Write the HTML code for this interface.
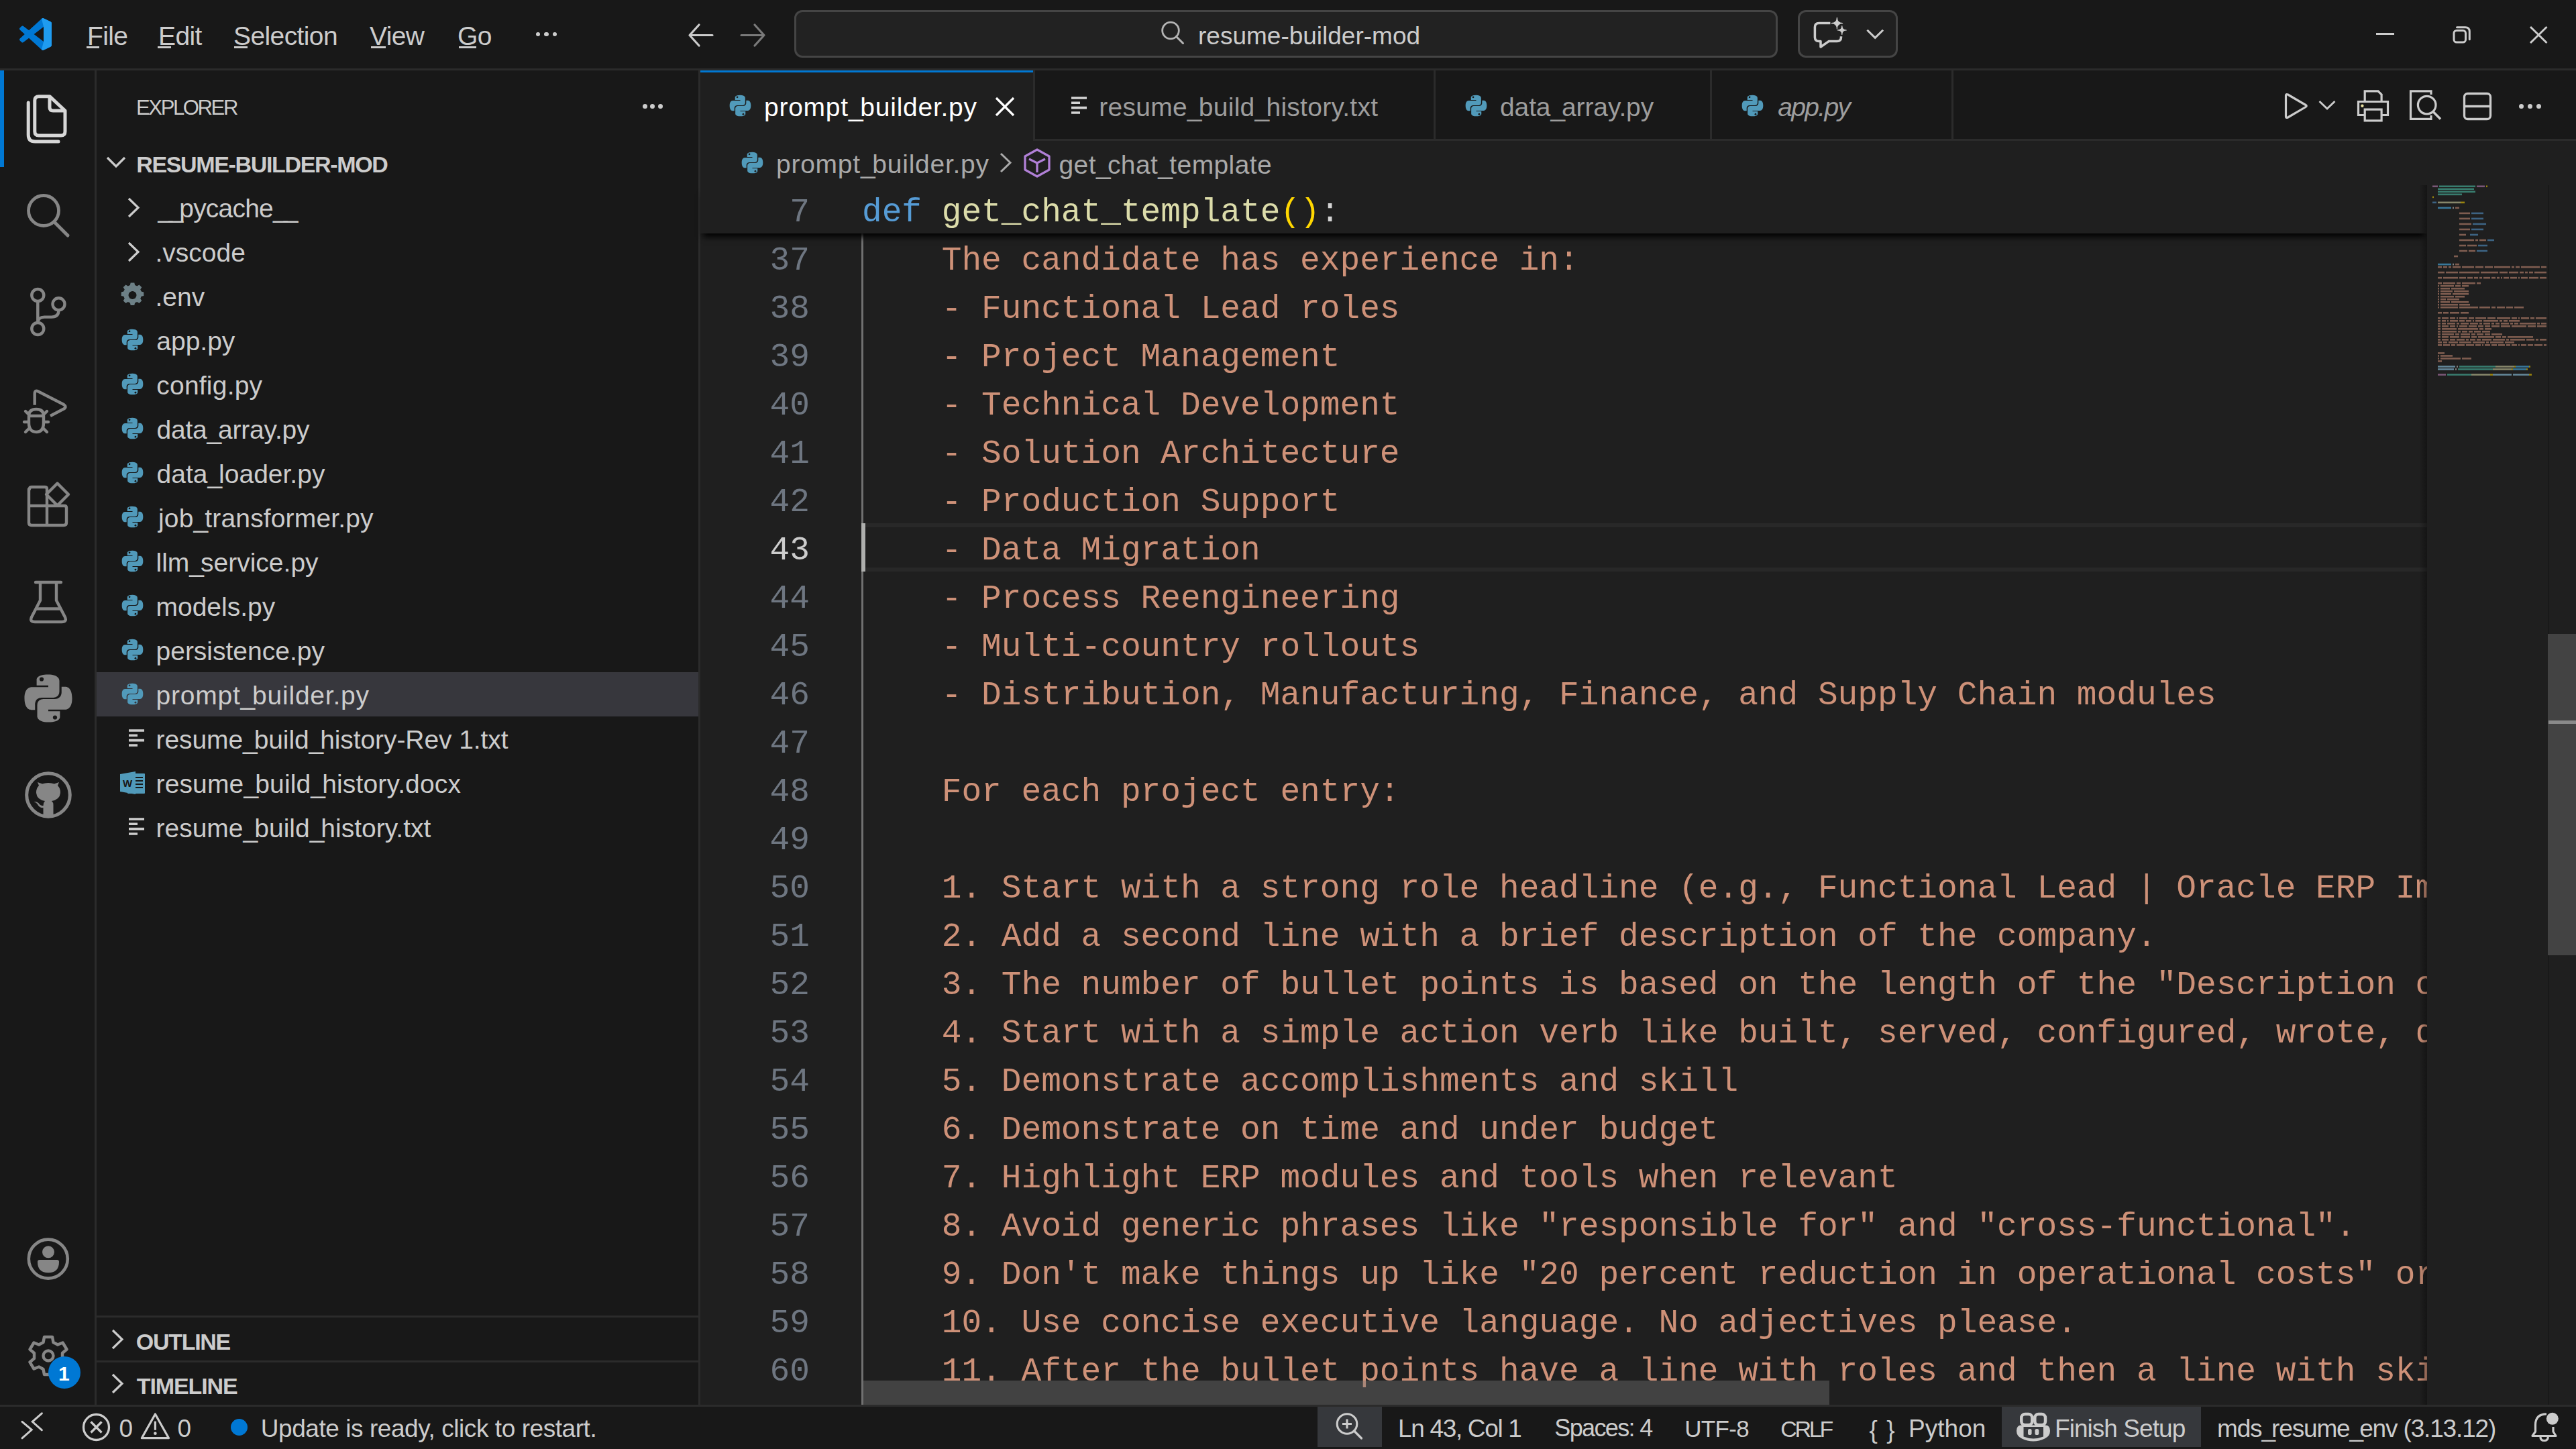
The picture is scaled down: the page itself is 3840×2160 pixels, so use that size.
<!DOCTYPE html>
<html><head><meta charset="utf-8"><title>VS Code</title>
<style>
html,body{margin:0;padding:0;width:3840px;height:2160px;overflow:hidden;background:#181818;}
body{position:relative;}
.a{position:absolute;}
.t{white-space:pre;}
svg{overflow:visible;}
</style></head><body>

<div class="a" style="left:0px;top:0px;width:3840px;height:102px;background:#181818;"></div>
<div class="a" style="left:0px;top:102px;width:3840px;height:3px;background:#2b2b2b;"></div>
<svg class="a" style="left:29px;top:27px" width="48" height="48" viewBox="0 0 100 100">
<defs><linearGradient id="lg" x1="0" y1="0" x2="1" y2="0"><stop offset="0" stop-color="#0065a9"/><stop offset="1" stop-color="#22a7f2"/></linearGradient></defs>
<path fill="#0078d4" d="M96.46 10.8L75.86.87a6.23 6.23 0 0 0-7.1 1.2L29.35 38.04 12.19 25.01a4.16 4.16 0 0 0-5.32.24L1.36 30.26a4.16 4.16 0 0 0 0 6.16L16.24 50 1.36 63.58a4.16 4.16 0 0 0 0 6.16l5.51 5.01a4.16 4.16 0 0 0 5.32.24l17.16-13.03 39.41 35.97a6.23 6.23 0 0 0 7.1 1.2l20.6-9.92A6.24 6.24 0 0 0 100 83.6V16.4a6.24 6.24 0 0 0-3.54-5.6zM75.01 72.7L45.1 50l29.91-22.7v45.4z"/>
<path fill="#1f9cf0" d="M75.86.87a6.23 6.23 0 0 0-7.1 1.2L75.01 27.3v45.4L68.76 97.93a6.23 6.23 0 0 0 7.1 1.2l20.6-9.92A6.24 6.24 0 0 0 100 83.6V16.4a6.24 6.24 0 0 0-3.54-5.6z"/>
</svg>
<div class="a t" style="left:130px;top:33.85px;font-family:'Liberation Sans',sans-serif;font-size:39px;line-height:39px;color:#cccccc;letter-spacing:-0.6px;">File</div>
<div class="a" style="left:129px;top:69px;width:19px;height:3px;background:#cccccc;"></div>
<div class="a t" style="left:236px;top:33.85px;font-family:'Liberation Sans',sans-serif;font-size:39px;line-height:39px;color:#cccccc;letter-spacing:-0.6px;">Edit</div>
<div class="a" style="left:235px;top:69px;width:20px;height:3px;background:#cccccc;"></div>
<div class="a t" style="left:348px;top:33.85px;font-family:'Liberation Sans',sans-serif;font-size:39px;line-height:39px;color:#cccccc;letter-spacing:-0.6px;">Selection</div>
<div class="a" style="left:349px;top:69px;width:20px;height:3px;background:#cccccc;"></div>
<div class="a t" style="left:551px;top:33.85px;font-family:'Liberation Sans',sans-serif;font-size:39px;line-height:39px;color:#cccccc;letter-spacing:-0.6px;">View</div>
<div class="a" style="left:553px;top:69px;width:22px;height:3px;background:#cccccc;"></div>
<div class="a t" style="left:682px;top:33.85px;font-family:'Liberation Sans',sans-serif;font-size:39px;line-height:39px;color:#cccccc;letter-spacing:-0.6px;">Go</div>
<div class="a" style="left:684px;top:69px;width:26px;height:3px;background:#cccccc;"></div>
<div class="a" style="left:798.8px;top:47.8px;width:6.4px;height:6.4px;border-radius:50%;background:#cccccc"></div>
<div class="a" style="left:811.3px;top:47.8px;width:6.4px;height:6.4px;border-radius:50%;background:#cccccc"></div>
<div class="a" style="left:823.8px;top:47.8px;width:6.4px;height:6.4px;border-radius:50%;background:#cccccc"></div>
<svg class="a" style="left:1020px;top:30px;" width="48" height="45" viewBox="0 0 48 45"><path d="M8 22.5 H42 M22 7 L8 22.5 L22 38" stroke="#cccccc" stroke-width="3.2" fill="none" stroke-linecap="round" stroke-linejoin="round"/></svg>
<svg class="a" style="left:1099px;top:30px;" width="48" height="45" viewBox="0 0 48 45"><path d="M6 22.5 H40 M26 7 L40 22.5 L26 38" stroke="#7a7a7a" stroke-width="3.2" fill="none" stroke-linecap="round" stroke-linejoin="round"/></svg>
<div class="a" style="left:1184px;top:15px;width:1460px;height:65px;border:3px solid #454545;border-radius:12px;background:#222222"></div>
<svg class="a" style="left:1726px;top:28px;" width="44" height="44" viewBox="0 0 44 44"><circle cx="19" cy="17.5" r="12.3" stroke="#b4b4b4" stroke-width="2.8" fill="none"/><path d="M27.5 26.5 L37.5 36.5" stroke="#b4b4b4" stroke-width="3" stroke-linecap="round"/></svg>
<div class="a t" style="left:1786px;top:34.55px;font-family:'Liberation Sans',sans-serif;font-size:37px;line-height:37px;color:#cccccc;">resume-builder-mod</div>
<div class="a" style="left:2680px;top:15px;width:143px;height:65px;border:3px solid #454545;border-radius:12px;background:#202020"></div>
<svg class="a" style="left:2690px;top:20px;" width="130" height="60" viewBox="0 0 130 60"><path d="M38.4 14.6 H21.4 Q15.4 14.6 15.4 20.6 V35.6 Q15.4 41.6 21.4 41.6 H24 V50 L36 41.6 H48.5 Q54.5 41.6 54.5 35.6 V34.3" stroke="#cccccc" stroke-width="3.5" fill="none" stroke-linejoin="round"/><path d="M48.4 6.299999999999999 Q48.4 14.6 56.7 14.6 Q48.4 14.6 48.4 22.9 Q48.4 14.6 40.099999999999994 14.6 Q48.4 14.6 48.4 6.299999999999999 Z M55.8 18.5 Q55.8 25 62.3 25 Q55.8 25 55.8 31.5 Q55.8 25 49.3 25 Q55.8 25 55.8 18.5 Z" fill="#cccccc" stroke="#cccccc" stroke-width="1.2" stroke-linejoin="round"/><path d="M93.4 24.7 L105.2 36.3 L117.1 24.7" stroke="#cccccc" stroke-width="3" fill="none"/></svg>
<div class="a" style="left:3542px;top:49px;width:27px;height:3px;background:#cccccc;"></div>
<svg class="a" style="left:3650px;top:35px;" width="36" height="32" viewBox="0 0 36 32"><rect x="8" y="10.5" width="17.5" height="17.5" rx="4" stroke="#cccccc" stroke-width="3" fill="none"/><path d="M12.5 5.8 H25 Q31.3 5.8 31.3 12 V23.8" stroke="#cccccc" stroke-width="3" fill="none" stroke-linecap="round"/></svg>
<svg class="a" style="left:3766px;top:35px;" width="36" height="34" viewBox="0 0 36 34"><path d="M6 5 L30.5 29 M30.5 5 L6 29" stroke="#cccccc" stroke-width="3" stroke-linecap="butt"/></svg>
<div class="a" style="left:0px;top:105px;width:141px;height:1989px;background:#181818;"></div>
<div class="a" style="left:141px;top:105px;width:3px;height:1989px;background:#2b2b2b;"></div>
<div class="a" style="left:0px;top:105px;width:6px;height:144px;background:#0078d4;"></div>
<svg class="a" style="left:36px;top:138px;" width="72" height="80" viewBox="0 0 72 80"><path d="M21.8 5.7 H38 L61 27 V57.9 Q61 63.9 55 63.9 H21.8 Q15.8 63.9 15.8 57.9 V11.7 Q15.8 5.7 21.8 5.7 Z" stroke="#d7d7d7" stroke-width="5" fill="none" stroke-linejoin="round"/><path d="M38 5.7 V22 Q38 27 43 27 H61" stroke="#d7d7d7" stroke-width="5" fill="none" stroke-linejoin="round"/><path d="M6.2 15 V63 Q6.2 73 16.2 73 H51" stroke="#d7d7d7" stroke-width="5" fill="none" stroke-linecap="round"/></svg>
<svg class="a" style="left:36px;top:282px;" width="72" height="72" viewBox="0 0 72 72"><circle cx="29" cy="32" r="22.5" stroke="#868686" stroke-width="4.8" fill="none"/><path d="M46 50 L65 69" stroke="#868686" stroke-width="5" stroke-linecap="round"/></svg>
<svg class="a" style="left:36px;top:426px;" width="72" height="78" viewBox="0 0 72 78"><circle cx="20.3" cy="14" r="9" stroke="#868686" stroke-width="4.4" fill="none"/><circle cx="51.5" cy="27.3" r="9" stroke="#868686" stroke-width="4.4" fill="none"/><circle cx="20.3" cy="64" r="9" stroke="#868686" stroke-width="4.4" fill="none"/><path d="M20.3 23 V55 M51.5 36.3 Q51.5 46.6 41 46.6 H30 Q21 46.6 20.3 55" stroke="#868686" stroke-width="4.4" fill="none"/></svg>
<svg class="a" style="left:30px;top:578px;" width="78" height="72" viewBox="0 0 78 72"><path d="M21.7 25.8 V9 Q21.7 3 27 5.5 L65 25 Q70 28.5 65 31.5 L45 42" stroke="#868686" stroke-width="4.4" fill="none" stroke-linecap="butt" stroke-linejoin="round"/><path d="M13 42 Q13 32 24 32 Q35 32 35 42 V52 Q35 66 24 66 Q13 66 13 52 Z" stroke="#868686" stroke-width="4.4" fill="none"/><path d="M14 42 H34 M8 35 L14 41 M40 35 L34 41 M6 51 H13 M35 51 H42 M8 66 L14 60 M40 66 L34 60" stroke="#868686" stroke-width="4.4" fill="none" stroke-linecap="round"/></svg>
<svg class="a" style="left:36px;top:717px;" width="72" height="72" viewBox="0 0 72 72"><path d="M8 12 Q8 9 11 9 H31 Q34 9 34 12 V37 H60 Q63 37 63 40 V62 Q63 66 59 66 H11 Q7 66 7 62 V12 Z M7 37 H34 M34 37 V66" stroke="#868686" stroke-width="4.4" fill="none" stroke-linejoin="round"/><path d="M49.5 3.5 L66 20 L49.5 36.5 L33 20 Z" stroke="#868686" stroke-width="4.4" fill="none" stroke-linejoin="round"/></svg>
<svg class="a" style="left:36px;top:860px;" width="72" height="72" viewBox="0 0 72 72"><path d="M17 8 H55" stroke="#868686" stroke-width="4.4" stroke-linecap="round"/><path d="M24 8 V35 L11 60 Q8 67 16 67 H56 Q64 67 61 60 L48 35 V8" stroke="#868686" stroke-width="4.4" fill="none" stroke-linejoin="round"/><path d="M19 47.5 H53" stroke="#868686" stroke-width="4.4"/></svg>
<svg class="a" style="left:35px;top:1004px" width="74" height="74" viewBox="0 0 100 100"><g fill="#868686"><path d="M49.6 2 C25 2 26.5 12.8 26.5 12.8 V24 H50 V27.3 H17.3 C17.3 27.3 2 25.6 2 49.8 C2 74 15.4 73.2 15.4 73.2 H23.3 V62 C23.3 62 22.9 48.6 36.5 48.6 H59.5 C59.5 48.6 72.3 48.8 72.3 36.2 V15.3 C72.3 15.3 74.3 2 49.6 2 Z"/><path d="M50.4 98 C75 98 73.5 87.2 73.5 87.2 V76 H50 V72.7 H82.7 C82.7 72.7 98 74.4 98 50.2 C98 26 84.6 26.8 84.6 26.8 H76.7 V38 C76.7 38 77.1 51.4 63.5 51.4 H40.5 C40.5 51.4 27.7 51.2 27.7 63.8 V84.7 C27.7 84.7 25.7 98 50.4 98 Z"/></g><circle cx="36.5" cy="11.5" r="4.2" fill="#181818"/><circle cx="63.5" cy="88.5" r="4.2" fill="#181818"/></svg>
<svg class="a" style="left:36px;top:1149px;" width="72" height="72" viewBox="0 0 72 72"><circle cx="36" cy="36" r="32.3" stroke="#868686" stroke-width="5" fill="none"/><path d="M22 22 L20 17 L27 19.5 Q36 16.5 45 19.5 L52 17 L50 22 Q54.5 27 54 33 Q53 43 41 45 Q43.5 47 43.5 51 V66 H28.5 V55 Q23 56 20 50 Q18.5 47.5 14.5 46 Q20 45.5 23 50 Q25 52.5 28.5 52 Q28.5 47.5 31 45 Q19 43 18 33 Q17.5 27 22 22 Z" fill="#868686"/></svg>
<svg class="a" style="left:36px;top:1841px;" width="72" height="72" viewBox="0 0 72 72"><circle cx="35.8" cy="35.6" r="29" stroke="#868686" stroke-width="4.6" fill="none"/><circle cx="36" cy="25.3" r="9" fill="#868686"/><path d="M20 40 Q20 37 23 37 H49 Q52 37 52 40 Q52 56.3 36 56.3 Q20 56.3 20 40 Z" fill="#868686"/></svg>
<svg class="a" style="left:36px;top:1987px;" width="72" height="72" viewBox="0 0 72 72"><path d="M30 6 H42 L43.5 14 L50 17.5 L57.5 14.5 L63.5 24.5 L57 30 V38 L63.5 43.5 L57.5 53.5 L50 50.5 L43.5 54 L42 62 H30 L28.5 54 L22 50.5 L14.5 53.5 L8.5 43.5 L15 38 V30 L8.5 24.5 L14.5 14.5 L22 17.5 L28.5 14 Z" stroke="#868686" stroke-width="4.4" fill="none" stroke-linejoin="round"/><circle cx="36" cy="34" r="7.5" stroke="#868686" stroke-width="4.4" fill="none"/></svg>
<div class="a" style="left:72px;top:2022px;width:48px;height:48px;border-radius:50%;background:#0078d4"></div>
<div class="a t" style="left:87px;top:2032.50px;font-family:'Liberation Sans',sans-serif;font-size:30px;line-height:30px;color:#ffffff;font-weight:700;">1</div>
<div class="a" style="left:144px;top:105px;width:897px;height:1989px;background:#181818;"></div>
<div class="a" style="left:1041px;top:105px;width:3px;height:1989px;background:#2b2b2b;"></div>
<div class="a t" style="left:203.0px;top:144.65px;font-family:'Liberation Sans',sans-serif;font-size:31px;line-height:31px;color:#cccccc;letter-spacing:-2.36px;">EXPLORER</div>
<div class="a" style="left:957.5px;top:154.5px;width:7px;height:7px;border-radius:50%;background:#cccccc"></div>
<div class="a" style="left:969.0px;top:154.5px;width:7px;height:7px;border-radius:50%;background:#cccccc"></div>
<div class="a" style="left:980.5px;top:154.5px;width:7px;height:7px;border-radius:50%;background:#cccccc"></div>
<svg class="a" style="left:156px;top:228px;" width="36" height="28" viewBox="0 0 36 28"><path d="M4 7 L17 20 L30 7" stroke="#cccccc" stroke-width="3.2" fill="none" stroke-linejoin="miter"/></svg>
<div class="a t" style="left:203.25px;top:228.10px;font-family:'Liberation Sans',sans-serif;font-size:34px;line-height:34px;color:#cccccc;font-weight:700;letter-spacing:-1.35px;">RESUME-BUILDER-MOD</div>
<svg class="a" style="left:188px;top:293px;" width="24" height="34" viewBox="0 0 24 34"><path d="M4 3 L18 16.5 L4 30" stroke="#cccccc" stroke-width="3.2" fill="none"/></svg>
<div class="a t" style="left:235.5px;top:291.35px;font-family:'Liberation Sans',sans-serif;font-size:39px;line-height:39px;color:#cccccc;letter-spacing:-0.8px;"><span style="letter-spacing:-5.80px">_</span><span style="letter-spacing:-5.80px">_</span>pycache<span style="letter-spacing:-5.80px">_</span><span style="letter-spacing:-5.80px">_</span></div>
<svg class="a" style="left:188px;top:359px;" width="24" height="34" viewBox="0 0 24 34"><path d="M4 3 L18 16.5 L4 30" stroke="#cccccc" stroke-width="3.2" fill="none"/></svg>
<div class="a t" style="left:231.5px;top:357.35px;font-family:'Liberation Sans',sans-serif;font-size:39px;line-height:39px;color:#cccccc;">.vscode</div>
<svg class="a" style="left:180px;top:423px;" width="36" height="36" viewBox="0 0 36 36"><g fill="#6d8086"><path d="M14.5 1 H21.5 L22.5 5.5 L26.5 7.3 L30.5 4.8 L35.2 9.5 L32.7 13.5 L34.5 17.5 L39 18.5 V25.5 L34.5 26.5 L32.7 30.5 L35.2 34.5 L30.5 39.2 L26.5 36.7 L22.5 38.5 L21.5 43 H14.5 L13.5 38.5 L9.5 36.7 L5.5 39.2 L0.8 34.5 L3.3 30.5 L1.5 26.5 L-3 25.5 V18.5 L1.5 17.5 L3.3 13.5 L0.8 9.5 L5.5 4.8 L9.5 7.3 L13.5 5.5 Z" transform="translate(1.5 -4) scale(0.8 0.8) translate(2 2)"/></g><circle cx="17.5" cy="17" r="6" fill="#181818"/></svg>
<div class="a t" style="left:231.5px;top:423.35px;font-family:'Liberation Sans',sans-serif;font-size:39px;line-height:39px;color:#cccccc;">.env</div>
<svg class="a" style="left:181px;top:490px" width="33" height="33" viewBox="0 0 100 100"><g fill="#519aba"><path d="M49.6 2 C25 2 26.5 12.8 26.5 12.8 V24 H50 V27.3 H17.3 C17.3 27.3 2 25.6 2 49.8 C2 74 15.4 73.2 15.4 73.2 H23.3 V62 C23.3 62 22.9 48.6 36.5 48.6 H59.5 C59.5 48.6 72.3 48.8 72.3 36.2 V15.3 C72.3 15.3 74.3 2 49.6 2 Z"/><path d="M50.4 98 C75 98 73.5 87.2 73.5 87.2 V76 H50 V72.7 H82.7 C82.7 72.7 98 74.4 98 50.2 C98 26 84.6 26.8 84.6 26.8 H76.7 V38 C76.7 38 77.1 51.4 63.5 51.4 H40.5 C40.5 51.4 27.7 51.2 27.7 63.8 V84.7 C27.7 84.7 25.7 98 50.4 98 Z"/></g><circle cx="36.5" cy="11.5" r="4.2" fill="#181818"/><circle cx="63.5" cy="88.5" r="4.2" fill="#181818"/></svg>
<div class="a t" style="left:233.25px;top:489.35px;font-family:'Liberation Sans',sans-serif;font-size:39px;line-height:39px;color:#cccccc;">app.py</div>
<svg class="a" style="left:181px;top:556px" width="33" height="33" viewBox="0 0 100 100"><g fill="#519aba"><path d="M49.6 2 C25 2 26.5 12.8 26.5 12.8 V24 H50 V27.3 H17.3 C17.3 27.3 2 25.6 2 49.8 C2 74 15.4 73.2 15.4 73.2 H23.3 V62 C23.3 62 22.9 48.6 36.5 48.6 H59.5 C59.5 48.6 72.3 48.8 72.3 36.2 V15.3 C72.3 15.3 74.3 2 49.6 2 Z"/><path d="M50.4 98 C75 98 73.5 87.2 73.5 87.2 V76 H50 V72.7 H82.7 C82.7 72.7 98 74.4 98 50.2 C98 26 84.6 26.8 84.6 26.8 H76.7 V38 C76.7 38 77.1 51.4 63.5 51.4 H40.5 C40.5 51.4 27.7 51.2 27.7 63.8 V84.7 C27.7 84.7 25.7 98 50.4 98 Z"/></g><circle cx="36.5" cy="11.5" r="4.2" fill="#181818"/><circle cx="63.5" cy="88.5" r="4.2" fill="#181818"/></svg>
<div class="a t" style="left:233.25px;top:555.35px;font-family:'Liberation Sans',sans-serif;font-size:39px;line-height:39px;color:#cccccc;letter-spacing:0.22px;">config.py</div>
<svg class="a" style="left:181px;top:622px" width="33" height="33" viewBox="0 0 100 100"><g fill="#519aba"><path d="M49.6 2 C25 2 26.5 12.8 26.5 12.8 V24 H50 V27.3 H17.3 C17.3 27.3 2 25.6 2 49.8 C2 74 15.4 73.2 15.4 73.2 H23.3 V62 C23.3 62 22.9 48.6 36.5 48.6 H59.5 C59.5 48.6 72.3 48.8 72.3 36.2 V15.3 C72.3 15.3 74.3 2 49.6 2 Z"/><path d="M50.4 98 C75 98 73.5 87.2 73.5 87.2 V76 H50 V72.7 H82.7 C82.7 72.7 98 74.4 98 50.2 C98 26 84.6 26.8 84.6 26.8 H76.7 V38 C76.7 38 77.1 51.4 63.5 51.4 H40.5 C40.5 51.4 27.7 51.2 27.7 63.8 V84.7 C27.7 84.7 25.7 98 50.4 98 Z"/></g><circle cx="36.5" cy="11.5" r="4.2" fill="#181818"/><circle cx="63.5" cy="88.5" r="4.2" fill="#181818"/></svg>
<div class="a t" style="left:233.5px;top:621.35px;font-family:'Liberation Sans',sans-serif;font-size:39px;line-height:39px;color:#cccccc;letter-spacing:-0.21px;">data<span style="letter-spacing:-5.21px">_</span>array.py</div>
<svg class="a" style="left:181px;top:688px" width="33" height="33" viewBox="0 0 100 100"><g fill="#519aba"><path d="M49.6 2 C25 2 26.5 12.8 26.5 12.8 V24 H50 V27.3 H17.3 C17.3 27.3 2 25.6 2 49.8 C2 74 15.4 73.2 15.4 73.2 H23.3 V62 C23.3 62 22.9 48.6 36.5 48.6 H59.5 C59.5 48.6 72.3 48.8 72.3 36.2 V15.3 C72.3 15.3 74.3 2 49.6 2 Z"/><path d="M50.4 98 C75 98 73.5 87.2 73.5 87.2 V76 H50 V72.7 H82.7 C82.7 72.7 98 74.4 98 50.2 C98 26 84.6 26.8 84.6 26.8 H76.7 V38 C76.7 38 77.1 51.4 63.5 51.4 H40.5 C40.5 51.4 27.7 51.2 27.7 63.8 V84.7 C27.7 84.7 25.7 98 50.4 98 Z"/></g><circle cx="36.5" cy="11.5" r="4.2" fill="#181818"/><circle cx="63.5" cy="88.5" r="4.2" fill="#181818"/></svg>
<div class="a t" style="left:233.5px;top:687.35px;font-family:'Liberation Sans',sans-serif;font-size:39px;line-height:39px;color:#cccccc;">data<span style="letter-spacing:-5.00px">_</span>loader.py</div>
<svg class="a" style="left:181px;top:754px" width="33" height="33" viewBox="0 0 100 100"><g fill="#519aba"><path d="M49.6 2 C25 2 26.5 12.8 26.5 12.8 V24 H50 V27.3 H17.3 C17.3 27.3 2 25.6 2 49.8 C2 74 15.4 73.2 15.4 73.2 H23.3 V62 C23.3 62 22.9 48.6 36.5 48.6 H59.5 C59.5 48.6 72.3 48.8 72.3 36.2 V15.3 C72.3 15.3 74.3 2 49.6 2 Z"/><path d="M50.4 98 C75 98 73.5 87.2 73.5 87.2 V76 H50 V72.7 H82.7 C82.7 72.7 98 74.4 98 50.2 C98 26 84.6 26.8 84.6 26.8 H76.7 V38 C76.7 38 77.1 51.4 63.5 51.4 H40.5 C40.5 51.4 27.7 51.2 27.7 63.8 V84.7 C27.7 84.7 25.7 98 50.4 98 Z"/></g><circle cx="36.5" cy="11.5" r="4.2" fill="#181818"/><circle cx="63.5" cy="88.5" r="4.2" fill="#181818"/></svg>
<div class="a t" style="left:236.0px;top:753.35px;font-family:'Liberation Sans',sans-serif;font-size:39px;line-height:39px;color:#cccccc;letter-spacing:0.15px;">job<span style="letter-spacing:-4.85px">_</span>transformer.py</div>
<svg class="a" style="left:181px;top:820px" width="33" height="33" viewBox="0 0 100 100"><g fill="#519aba"><path d="M49.6 2 C25 2 26.5 12.8 26.5 12.8 V24 H50 V27.3 H17.3 C17.3 27.3 2 25.6 2 49.8 C2 74 15.4 73.2 15.4 73.2 H23.3 V62 C23.3 62 22.9 48.6 36.5 48.6 H59.5 C59.5 48.6 72.3 48.8 72.3 36.2 V15.3 C72.3 15.3 74.3 2 49.6 2 Z"/><path d="M50.4 98 C75 98 73.5 87.2 73.5 87.2 V76 H50 V72.7 H82.7 C82.7 72.7 98 74.4 98 50.2 C98 26 84.6 26.8 84.6 26.8 H76.7 V38 C76.7 38 77.1 51.4 63.5 51.4 H40.5 C40.5 51.4 27.7 51.2 27.7 63.8 V84.7 C27.7 84.7 25.7 98 50.4 98 Z"/></g><circle cx="36.5" cy="11.5" r="4.2" fill="#181818"/><circle cx="63.5" cy="88.5" r="4.2" fill="#181818"/></svg>
<div class="a t" style="left:232.5px;top:819.35px;font-family:'Liberation Sans',sans-serif;font-size:39px;line-height:39px;color:#cccccc;">llm<span style="letter-spacing:-5.00px">_</span>service.py</div>
<svg class="a" style="left:181px;top:886px" width="33" height="33" viewBox="0 0 100 100"><g fill="#519aba"><path d="M49.6 2 C25 2 26.5 12.8 26.5 12.8 V24 H50 V27.3 H17.3 C17.3 27.3 2 25.6 2 49.8 C2 74 15.4 73.2 15.4 73.2 H23.3 V62 C23.3 62 22.9 48.6 36.5 48.6 H59.5 C59.5 48.6 72.3 48.8 72.3 36.2 V15.3 C72.3 15.3 74.3 2 49.6 2 Z"/><path d="M50.4 98 C75 98 73.5 87.2 73.5 87.2 V76 H50 V72.7 H82.7 C82.7 72.7 98 74.4 98 50.2 C98 26 84.6 26.8 84.6 26.8 H76.7 V38 C76.7 38 77.1 51.4 63.5 51.4 H40.5 C40.5 51.4 27.7 51.2 27.7 63.8 V84.7 C27.7 84.7 25.7 98 50.4 98 Z"/></g><circle cx="36.5" cy="11.5" r="4.2" fill="#181818"/><circle cx="63.5" cy="88.5" r="4.2" fill="#181818"/></svg>
<div class="a t" style="left:232.5px;top:885.35px;font-family:'Liberation Sans',sans-serif;font-size:39px;line-height:39px;color:#cccccc;">models.py</div>
<svg class="a" style="left:181px;top:952px" width="33" height="33" viewBox="0 0 100 100"><g fill="#519aba"><path d="M49.6 2 C25 2 26.5 12.8 26.5 12.8 V24 H50 V27.3 H17.3 C17.3 27.3 2 25.6 2 49.8 C2 74 15.4 73.2 15.4 73.2 H23.3 V62 C23.3 62 22.9 48.6 36.5 48.6 H59.5 C59.5 48.6 72.3 48.8 72.3 36.2 V15.3 C72.3 15.3 74.3 2 49.6 2 Z"/><path d="M50.4 98 C75 98 73.5 87.2 73.5 87.2 V76 H50 V72.7 H82.7 C82.7 72.7 98 74.4 98 50.2 C98 26 84.6 26.8 84.6 26.8 H76.7 V38 C76.7 38 77.1 51.4 63.5 51.4 H40.5 C40.5 51.4 27.7 51.2 27.7 63.8 V84.7 C27.7 84.7 25.7 98 50.4 98 Z"/></g><circle cx="36.5" cy="11.5" r="4.2" fill="#181818"/><circle cx="63.5" cy="88.5" r="4.2" fill="#181818"/></svg>
<div class="a t" style="left:232.5px;top:951.35px;font-family:'Liberation Sans',sans-serif;font-size:39px;line-height:39px;color:#cccccc;">persistence.py</div>
<div class="a" style="left:144px;top:1002px;width:897px;height:66px;background:#37373d;"></div>
<svg class="a" style="left:181px;top:1018px" width="33" height="33" viewBox="0 0 100 100"><g fill="#519aba"><path d="M49.6 2 C25 2 26.5 12.8 26.5 12.8 V24 H50 V27.3 H17.3 C17.3 27.3 2 25.6 2 49.8 C2 74 15.4 73.2 15.4 73.2 H23.3 V62 C23.3 62 22.9 48.6 36.5 48.6 H59.5 C59.5 48.6 72.3 48.8 72.3 36.2 V15.3 C72.3 15.3 74.3 2 49.6 2 Z"/><path d="M50.4 98 C75 98 73.5 87.2 73.5 87.2 V76 H50 V72.7 H82.7 C82.7 72.7 98 74.4 98 50.2 C98 26 84.6 26.8 84.6 26.8 H76.7 V38 C76.7 38 77.1 51.4 63.5 51.4 H40.5 C40.5 51.4 27.7 51.2 27.7 63.8 V84.7 C27.7 84.7 25.7 98 50.4 98 Z"/></g><circle cx="36.5" cy="11.5" r="4.2" fill="#37373d"/><circle cx="63.5" cy="88.5" r="4.2" fill="#37373d"/></svg>
<div class="a t" style="left:232.5px;top:1017.35px;font-family:'Liberation Sans',sans-serif;font-size:39px;line-height:39px;color:#cccccc;letter-spacing:0.78px;">prompt<span style="letter-spacing:-4.22px">_</span>builder.py</div>
<svg class="a" style="left:191px;top:1087px;" width="26" height="28" viewBox="0 0 26 28"><path d="M1 2 H24 M1 9.3 H14 M1 16.6 H24 M1 24 H14" stroke="#cccccc" stroke-width="3.6"/></svg>
<div class="a t" style="left:232.5px;top:1083.35px;font-family:'Liberation Sans',sans-serif;font-size:39px;line-height:39px;color:#cccccc;letter-spacing:-0.09px;">resume<span style="letter-spacing:-5.09px">_</span>build<span style="letter-spacing:-5.09px">_</span>history-Rev 1.txt</div>
<svg class="a" style="left:178px;top:1147px;" width="40" height="40" viewBox="0 0 40 40"><path d="M10 3 H38 V37 H10 Z" fill="none"/><rect x="12" y="6" width="26" height="30" fill="#519aba" rx="1"/><path d="M21 12 H35 M21 17 H35 M21 22 H35 M21 27 H35" stroke="#181818" stroke-width="2"/><path d="M1 7 L24 3 V37 L1 33 Z" fill="#519aba"/><text x="5" y="26" font-family="Liberation Sans" font-weight="700" font-size="15" fill="#181818">W</text></svg>
<div class="a t" style="left:232.5px;top:1149.35px;font-family:'Liberation Sans',sans-serif;font-size:39px;line-height:39px;color:#cccccc;letter-spacing:0.14px;">resume<span style="letter-spacing:-4.86px">_</span>build<span style="letter-spacing:-4.86px">_</span>history.docx</div>
<svg class="a" style="left:191px;top:1219px;" width="26" height="28" viewBox="0 0 26 28"><path d="M1 2 H24 M1 9.3 H14 M1 16.6 H24 M1 24 H14" stroke="#cccccc" stroke-width="3.6"/></svg>
<div class="a t" style="left:232.5px;top:1215.35px;font-family:'Liberation Sans',sans-serif;font-size:39px;line-height:39px;color:#cccccc;">resume<span style="letter-spacing:-5.00px">_</span>build<span style="letter-spacing:-5.00px">_</span>history.txt</div>
<div class="a" style="left:144px;top:1961px;width:897px;height:3px;background:#2b2b2b;"></div>
<svg class="a" style="left:164px;top:1980px;" width="24" height="34" viewBox="0 0 24 34"><path d="M4 3 L18 16.5 L4 30" stroke="#cccccc" stroke-width="3.2" fill="none"/></svg>
<div class="a t" style="left:202.75px;top:1983.10px;font-family:'Liberation Sans',sans-serif;font-size:34px;line-height:34px;color:#cccccc;font-weight:700;letter-spacing:-1.29px;">OUTLINE</div>
<div class="a" style="left:144px;top:2028px;width:897px;height:3px;background:#2b2b2b;"></div>
<svg class="a" style="left:164px;top:2046px;" width="24" height="34" viewBox="0 0 24 34"><path d="M4 3 L18 16.5 L4 30" stroke="#cccccc" stroke-width="3.2" fill="none"/></svg>
<div class="a t" style="left:203.75px;top:2048.60px;font-family:'Liberation Sans',sans-serif;font-size:34px;line-height:34px;color:#cccccc;font-weight:700;letter-spacing:-1.11px;">TIMELINE</div>
<div class="a" style="left:1044px;top:105px;width:2796px;height:105px;background:#181818;"></div>
<div class="a" style="left:1540px;top:207px;width:2300px;height:3px;background:#2b2b2b;"></div>
<div class="a" style="left:1044px;top:105px;width:496px;height:105px;background:#1f1f1f;"></div>
<div class="a" style="left:1044px;top:105px;width:496px;height:3px;background:#0078d4;"></div>
<div class="a" style="left:1540px;top:105px;width:3px;height:102px;background:#2b2b2b;"></div>
<div class="a" style="left:2137px;top:105px;width:3px;height:102px;background:#2b2b2b;"></div>
<div class="a" style="left:2549px;top:105px;width:3px;height:102px;background:#2b2b2b;"></div>
<div class="a" style="left:2909px;top:105px;width:3px;height:102px;background:#2b2b2b;"></div>
<svg class="a" style="left:1087px;top:141px" width="33" height="33" viewBox="0 0 100 100"><g fill="#519aba"><path d="M49.6 2 C25 2 26.5 12.8 26.5 12.8 V24 H50 V27.3 H17.3 C17.3 27.3 2 25.6 2 49.8 C2 74 15.4 73.2 15.4 73.2 H23.3 V62 C23.3 62 22.9 48.6 36.5 48.6 H59.5 C59.5 48.6 72.3 48.8 72.3 36.2 V15.3 C72.3 15.3 74.3 2 49.6 2 Z"/><path d="M50.4 98 C75 98 73.5 87.2 73.5 87.2 V76 H50 V72.7 H82.7 C82.7 72.7 98 74.4 98 50.2 C98 26 84.6 26.8 84.6 26.8 H76.7 V38 C76.7 38 77.1 51.4 63.5 51.4 H40.5 C40.5 51.4 27.7 51.2 27.7 63.8 V84.7 C27.7 84.7 25.7 98 50.4 98 Z"/></g><circle cx="36.5" cy="11.5" r="4.2" fill="#1f1f1f"/><circle cx="63.5" cy="88.5" r="4.2" fill="#1f1f1f"/></svg>
<div class="a t" style="left:1139.0px;top:140.35px;font-family:'Liberation Sans',sans-serif;font-size:39px;line-height:39px;color:#ffffff;letter-spacing:0.75px;">prompt<span style="letter-spacing:-4.25px">_</span>builder.py</div>
<svg class="a" style="left:1482px;top:143px;" width="32" height="32" viewBox="0 0 32 32"><path d="M3 3 L29 29 M29 3 L3 29" stroke="#ffffff" stroke-width="3.2"/></svg>
<svg class="a" style="left:1596px;top:144px;" width="26" height="28" viewBox="0 0 26 28"><path d="M1 2 H24 M1 9.3 H14 M1 16.6 H24 M1 24 H14" stroke="#d4d4d4" stroke-width="3.6"/></svg>
<div class="a t" style="left:1638.25px;top:140.35px;font-family:'Liberation Sans',sans-serif;font-size:39px;line-height:39px;color:#9d9d9d;letter-spacing:0.26px;">resume<span style="letter-spacing:-4.74px">_</span>build<span style="letter-spacing:-4.74px">_</span>history.txt</div>
<svg class="a" style="left:2184px;top:141px" width="33" height="33" viewBox="0 0 100 100"><g fill="#519aba"><path d="M49.6 2 C25 2 26.5 12.8 26.5 12.8 V24 H50 V27.3 H17.3 C17.3 27.3 2 25.6 2 49.8 C2 74 15.4 73.2 15.4 73.2 H23.3 V62 C23.3 62 22.9 48.6 36.5 48.6 H59.5 C59.5 48.6 72.3 48.8 72.3 36.2 V15.3 C72.3 15.3 74.3 2 49.6 2 Z"/><path d="M50.4 98 C75 98 73.5 87.2 73.5 87.2 V76 H50 V72.7 H82.7 C82.7 72.7 98 74.4 98 50.2 C98 26 84.6 26.8 84.6 26.8 H76.7 V38 C76.7 38 77.1 51.4 63.5 51.4 H40.5 C40.5 51.4 27.7 51.2 27.7 63.8 V84.7 C27.7 84.7 25.7 98 50.4 98 Z"/></g><circle cx="36.5" cy="11.5" r="4.2" fill="#181818"/><circle cx="63.5" cy="88.5" r="4.2" fill="#181818"/></svg>
<div class="a t" style="left:2236.0px;top:140.35px;font-family:'Liberation Sans',sans-serif;font-size:39px;line-height:39px;color:#9d9d9d;letter-spacing:-0.12px;">data<span style="letter-spacing:-5.12px">_</span>array.py</div>
<svg class="a" style="left:2596px;top:141px" width="33" height="33" viewBox="0 0 100 100"><g fill="#519aba"><path d="M49.6 2 C25 2 26.5 12.8 26.5 12.8 V24 H50 V27.3 H17.3 C17.3 27.3 2 25.6 2 49.8 C2 74 15.4 73.2 15.4 73.2 H23.3 V62 C23.3 62 22.9 48.6 36.5 48.6 H59.5 C59.5 48.6 72.3 48.8 72.3 36.2 V15.3 C72.3 15.3 74.3 2 49.6 2 Z"/><path d="M50.4 98 C75 98 73.5 87.2 73.5 87.2 V76 H50 V72.7 H82.7 C82.7 72.7 98 74.4 98 50.2 C98 26 84.6 26.8 84.6 26.8 H76.7 V38 C76.7 38 77.1 51.4 63.5 51.4 H40.5 C40.5 51.4 27.7 51.2 27.7 63.8 V84.7 C27.7 84.7 25.7 98 50.4 98 Z"/></g><circle cx="36.5" cy="11.5" r="4.2" fill="#181818"/><circle cx="63.5" cy="88.5" r="4.2" fill="#181818"/></svg>
<div class="a t" style="left:2650.25px;top:140.35px;font-family:'Liberation Sans',sans-serif;font-size:39px;line-height:39px;color:#9d9d9d;font-style:italic;letter-spacing:-1.65px;">app.py</div>
<svg class="a" style="left:3400px;top:136px;" width="44" height="44" viewBox="0 0 44 44"><path d="M7.5 6.5 Q7.5 3.5 10.5 5 L37 20.5 Q39.5 22 37 23.5 L10.5 39 Q7.5 40.5 7.5 37.5 Z" stroke="#cccccc" stroke-width="3.2" fill="none" stroke-linejoin="round"/></svg>
<svg class="a" style="left:3454px;top:146px;" width="30" height="22" viewBox="0 0 30 22"><path d="M3.5 5 L15 16 L26.5 5" stroke="#cccccc" stroke-width="2.8" fill="none"/></svg>
<svg class="a" style="left:3510px;top:131px;" width="56" height="54" viewBox="0 0 56 54"><path d="M15.2 20.5 V4.8 H35 L40.1 10 V20.5" stroke="#cccccc" stroke-width="3.2" fill="none" stroke-linejoin="miter"/><path d="M15.2 40.5 H5.5 V20.5 H49.5 V40.5 H40.1" stroke="#cccccc" stroke-width="3.2" fill="none"/><path d="M15.2 32.2 H40.1 V48.8 H15.2 Z" stroke="#cccccc" stroke-width="3.2" fill="none"/><circle cx="11.4" cy="26.7" r="2.2" fill="#e8e0a0"/></svg>
<svg class="a" style="left:3588px;top:131px;" width="56" height="54" viewBox="0 0 56 54"><path d="M36 10 V4.8 H5.5 V46.3 H36 V41" stroke="#cccccc" stroke-width="3.2" fill="none"/><circle cx="29.7" cy="25.6" r="13.3" stroke="#cccccc" stroke-width="3.2" fill="none"/><path d="M39 35.5 L50 46.5" stroke="#cccccc" stroke-width="3.6"/></svg>
<svg class="a" style="left:3668px;top:134px;" width="52" height="48" viewBox="0 0 52 48"><rect x="5.5" y="5.5" width="39" height="38" rx="5" stroke="#cccccc" stroke-width="3.3" fill="none"/><path d="M5.5 24.5 H44.5" stroke="#cccccc" stroke-width="3.3"/></svg>
<div class="a" style="left:3754.5px;top:154.5px;width:7px;height:7px;border-radius:50%;background:#cccccc"></div>
<div class="a" style="left:3767.5px;top:154.5px;width:7px;height:7px;border-radius:50%;background:#cccccc"></div>
<div class="a" style="left:3780.5px;top:154.5px;width:7px;height:7px;border-radius:50%;background:#cccccc"></div>
<div class="a" style="left:1044px;top:210px;width:2796px;height:66px;background:#1f1f1f;"></div>
<svg class="a" style="left:1105px;top:226px" width="33" height="33" viewBox="0 0 100 100"><g fill="#519aba"><path d="M49.6 2 C25 2 26.5 12.8 26.5 12.8 V24 H50 V27.3 H17.3 C17.3 27.3 2 25.6 2 49.8 C2 74 15.4 73.2 15.4 73.2 H23.3 V62 C23.3 62 22.9 48.6 36.5 48.6 H59.5 C59.5 48.6 72.3 48.8 72.3 36.2 V15.3 C72.3 15.3 74.3 2 49.6 2 Z"/><path d="M50.4 98 C75 98 73.5 87.2 73.5 87.2 V76 H50 V72.7 H82.7 C82.7 72.7 98 74.4 98 50.2 C98 26 84.6 26.8 84.6 26.8 H76.7 V38 C76.7 38 77.1 51.4 63.5 51.4 H40.5 C40.5 51.4 27.7 51.2 27.7 63.8 V84.7 C27.7 84.7 25.7 98 50.4 98 Z"/></g><circle cx="36.5" cy="11.5" r="4.2" fill="#1f1f1f"/><circle cx="63.5" cy="88.5" r="4.2" fill="#1f1f1f"/></svg>
<div class="a t" style="left:1157.0px;top:225.35px;font-family:'Liberation Sans',sans-serif;font-size:39px;line-height:39px;color:#a9a9a9;letter-spacing:0.75px;">prompt<span style="letter-spacing:-4.25px">_</span>builder.py</div>
<svg class="a" style="left:1488px;top:226px;" width="24" height="34" viewBox="0 0 24 34"><path d="M4 3 L18 16.5 L4 30" stroke="#a9a9a9" stroke-width="3" fill="none"/></svg>
<svg class="a" style="left:1523px;top:220px;" width="46" height="46" viewBox="0 0 46 46"><path d="M23 3 L41 13 V33 L23 43 L5 33 V13 Z" stroke="#b180d7" stroke-width="3.3" fill="none" stroke-linejoin="round"/><path d="M11 17 L23 23 L35 17 M23 23 V37" stroke="#b180d7" stroke-width="3.3" fill="none"/></svg>
<div class="a t" style="left:1578.5px;top:225.85px;font-family:'Liberation Sans',sans-serif;font-size:39px;line-height:39px;color:#a9a9a9;letter-spacing:0.39px;">get<span style="letter-spacing:-4.61px">_</span>chat<span style="letter-spacing:-4.61px">_</span>template</div>
<div class="a" style="left:1044px;top:276px;width:2796px;height:1818px;background:#1f1f1f;"></div>
<div class="a" style="left:1290px;top:780px;width:2328px;height:6px;background:#282828;"></div>
<div class="a" style="left:1290px;top:846px;width:2328px;height:6px;background:#282828;"></div>
<div class="a t" style="left:1147.62px;top:353.14px;font-family:'Liberation Mono',monospace;font-size:49.48px;line-height:72px;color:#6e7681">37</div>
<div class="a t" style="left:1285.0px;top:353.14px;width:2333.0px;overflow:hidden;font-family:'Liberation Mono',monospace;font-size:49.48px;line-height:72px;height:72px;"><span style="color:#ce9178">    The candidate has experience in:</span></div>
<div class="a t" style="left:1147.62px;top:425.14px;font-family:'Liberation Mono',monospace;font-size:49.48px;line-height:72px;color:#6e7681">38</div>
<div class="a t" style="left:1285.0px;top:425.14px;width:2333.0px;overflow:hidden;font-family:'Liberation Mono',monospace;font-size:49.48px;line-height:72px;height:72px;"><span style="color:#ce9178">    - Functional Lead roles</span></div>
<div class="a t" style="left:1147.62px;top:497.14px;font-family:'Liberation Mono',monospace;font-size:49.48px;line-height:72px;color:#6e7681">39</div>
<div class="a t" style="left:1285.0px;top:497.14px;width:2333.0px;overflow:hidden;font-family:'Liberation Mono',monospace;font-size:49.48px;line-height:72px;height:72px;"><span style="color:#ce9178">    - Project Management</span></div>
<div class="a t" style="left:1147.62px;top:569.14px;font-family:'Liberation Mono',monospace;font-size:49.48px;line-height:72px;color:#6e7681">40</div>
<div class="a t" style="left:1285.0px;top:569.14px;width:2333.0px;overflow:hidden;font-family:'Liberation Mono',monospace;font-size:49.48px;line-height:72px;height:72px;"><span style="color:#ce9178">    - Technical Development</span></div>
<div class="a t" style="left:1147.62px;top:641.14px;font-family:'Liberation Mono',monospace;font-size:49.48px;line-height:72px;color:#6e7681">41</div>
<div class="a t" style="left:1285.0px;top:641.14px;width:2333.0px;overflow:hidden;font-family:'Liberation Mono',monospace;font-size:49.48px;line-height:72px;height:72px;"><span style="color:#ce9178">    - Solution Architecture</span></div>
<div class="a t" style="left:1147.62px;top:713.14px;font-family:'Liberation Mono',monospace;font-size:49.48px;line-height:72px;color:#6e7681">42</div>
<div class="a t" style="left:1285.0px;top:713.14px;width:2333.0px;overflow:hidden;font-family:'Liberation Mono',monospace;font-size:49.48px;line-height:72px;height:72px;"><span style="color:#ce9178">    - Production Support</span></div>
<div class="a t" style="left:1147.62px;top:785.14px;font-family:'Liberation Mono',monospace;font-size:49.48px;line-height:72px;color:#cccccc">43</div>
<div class="a t" style="left:1285.0px;top:785.14px;width:2333.0px;overflow:hidden;font-family:'Liberation Mono',monospace;font-size:49.48px;line-height:72px;height:72px;"><span style="color:#ce9178">    - Data Migration</span></div>
<div class="a t" style="left:1147.62px;top:857.14px;font-family:'Liberation Mono',monospace;font-size:49.48px;line-height:72px;color:#6e7681">44</div>
<div class="a t" style="left:1285.0px;top:857.14px;width:2333.0px;overflow:hidden;font-family:'Liberation Mono',monospace;font-size:49.48px;line-height:72px;height:72px;"><span style="color:#ce9178">    - Process Reengineering</span></div>
<div class="a t" style="left:1147.62px;top:929.14px;font-family:'Liberation Mono',monospace;font-size:49.48px;line-height:72px;color:#6e7681">45</div>
<div class="a t" style="left:1285.0px;top:929.14px;width:2333.0px;overflow:hidden;font-family:'Liberation Mono',monospace;font-size:49.48px;line-height:72px;height:72px;"><span style="color:#ce9178">    - Multi-country rollouts</span></div>
<div class="a t" style="left:1147.62px;top:1001.14px;font-family:'Liberation Mono',monospace;font-size:49.48px;line-height:72px;color:#6e7681">46</div>
<div class="a t" style="left:1285.0px;top:1001.14px;width:2333.0px;overflow:hidden;font-family:'Liberation Mono',monospace;font-size:49.48px;line-height:72px;height:72px;"><span style="color:#ce9178">    - Distribution, Manufacturing, Finance, and Supply Chain modules</span></div>
<div class="a t" style="left:1147.62px;top:1073.14px;font-family:'Liberation Mono',monospace;font-size:49.48px;line-height:72px;color:#6e7681">47</div>
<div class="a t" style="left:1147.62px;top:1145.14px;font-family:'Liberation Mono',monospace;font-size:49.48px;line-height:72px;color:#6e7681">48</div>
<div class="a t" style="left:1285.0px;top:1145.14px;width:2333.0px;overflow:hidden;font-family:'Liberation Mono',monospace;font-size:49.48px;line-height:72px;height:72px;"><span style="color:#ce9178">    For each project entry:</span></div>
<div class="a t" style="left:1147.62px;top:1217.14px;font-family:'Liberation Mono',monospace;font-size:49.48px;line-height:72px;color:#6e7681">49</div>
<div class="a t" style="left:1147.62px;top:1289.14px;font-family:'Liberation Mono',monospace;font-size:49.48px;line-height:72px;color:#6e7681">50</div>
<div class="a t" style="left:1285.0px;top:1289.14px;width:2333.0px;overflow:hidden;font-family:'Liberation Mono',monospace;font-size:49.48px;line-height:72px;height:72px;"><span style="color:#ce9178">    1. Start with a strong role headline (e.g., Functional Lead | Oracle ERP Implementation Lead)</span></div>
<div class="a t" style="left:1147.62px;top:1361.14px;font-family:'Liberation Mono',monospace;font-size:49.48px;line-height:72px;color:#6e7681">51</div>
<div class="a t" style="left:1285.0px;top:1361.14px;width:2333.0px;overflow:hidden;font-family:'Liberation Mono',monospace;font-size:49.48px;line-height:72px;height:72px;"><span style="color:#ce9178">    2. Add a second line with a brief description of the company.</span></div>
<div class="a t" style="left:1147.62px;top:1433.14px;font-family:'Liberation Mono',monospace;font-size:49.48px;line-height:72px;color:#6e7681">52</div>
<div class="a t" style="left:1285.0px;top:1433.14px;width:2333.0px;overflow:hidden;font-family:'Liberation Mono',monospace;font-size:49.48px;line-height:72px;height:72px;"><span style="color:#ce9178">    3. The number of bullet points is based on the length of the &quot;Description of work&quot;</span></div>
<div class="a t" style="left:1147.62px;top:1505.14px;font-family:'Liberation Mono',monospace;font-size:49.48px;line-height:72px;color:#6e7681">53</div>
<div class="a t" style="left:1285.0px;top:1505.14px;width:2333.0px;overflow:hidden;font-family:'Liberation Mono',monospace;font-size:49.48px;line-height:72px;height:72px;"><span style="color:#ce9178">    4. Start with a simple action verb like built, served, configured, wrote, developed</span></div>
<div class="a t" style="left:1147.62px;top:1577.14px;font-family:'Liberation Mono',monospace;font-size:49.48px;line-height:72px;color:#6e7681">54</div>
<div class="a t" style="left:1285.0px;top:1577.14px;width:2333.0px;overflow:hidden;font-family:'Liberation Mono',monospace;font-size:49.48px;line-height:72px;height:72px;"><span style="color:#ce9178">    5. Demonstrate accomplishments and skill</span></div>
<div class="a t" style="left:1147.62px;top:1649.14px;font-family:'Liberation Mono',monospace;font-size:49.48px;line-height:72px;color:#6e7681">55</div>
<div class="a t" style="left:1285.0px;top:1649.14px;width:2333.0px;overflow:hidden;font-family:'Liberation Mono',monospace;font-size:49.48px;line-height:72px;height:72px;"><span style="color:#ce9178">    6. Demonstrate on time and under budget</span></div>
<div class="a t" style="left:1147.62px;top:1721.14px;font-family:'Liberation Mono',monospace;font-size:49.48px;line-height:72px;color:#6e7681">56</div>
<div class="a t" style="left:1285.0px;top:1721.14px;width:2333.0px;overflow:hidden;font-family:'Liberation Mono',monospace;font-size:49.48px;line-height:72px;height:72px;"><span style="color:#ce9178">    7. Highlight ERP modules and tools when relevant</span></div>
<div class="a t" style="left:1147.62px;top:1793.14px;font-family:'Liberation Mono',monospace;font-size:49.48px;line-height:72px;color:#6e7681">57</div>
<div class="a t" style="left:1285.0px;top:1793.14px;width:2333.0px;overflow:hidden;font-family:'Liberation Mono',monospace;font-size:49.48px;line-height:72px;height:72px;"><span style="color:#ce9178">    8. Avoid generic phrases like &quot;responsible for&quot; and &quot;cross-functional&quot;.</span></div>
<div class="a t" style="left:1147.62px;top:1865.14px;font-family:'Liberation Mono',monospace;font-size:49.48px;line-height:72px;color:#6e7681">58</div>
<div class="a t" style="left:1285.0px;top:1865.14px;width:2333.0px;overflow:hidden;font-family:'Liberation Mono',monospace;font-size:49.48px;line-height:72px;height:72px;"><span style="color:#ce9178">    9. Don&#x27;t make things up like &quot;20 percent reduction in operational costs&quot; or &quot;Trained 50 users&quot;</span></div>
<div class="a t" style="left:1147.62px;top:1937.14px;font-family:'Liberation Mono',monospace;font-size:49.48px;line-height:72px;color:#6e7681">59</div>
<div class="a t" style="left:1285.0px;top:1937.14px;width:2333.0px;overflow:hidden;font-family:'Liberation Mono',monospace;font-size:49.48px;line-height:72px;height:72px;"><span style="color:#ce9178">    10. Use concise executive language. No adjectives please.</span></div>
<div class="a t" style="left:1147.62px;top:2009.14px;font-family:'Liberation Mono',monospace;font-size:49.48px;line-height:72px;color:#6e7681">60</div>
<div class="a t" style="left:1285.0px;top:2009.14px;width:2333.0px;overflow:hidden;font-family:'Liberation Mono',monospace;font-size:49.48px;line-height:72px;height:72px;"><span style="color:#ce9178">    11. After the bullet points have a line with roles and then a line with skills used</span></div>
<div class="a" style="left:1284px;top:348px;width:3px;height:1746px;background:#707070;"></div>
<div class="a" style="left:1284px;top:780px;width:6px;height:72px;background:#aeafad;"></div>
<div class="a" style="left:1044px;top:276px;width:2574px;height:72px;box-shadow:#000000 0 9px 9px -4px;"></div>
<div class="a" style="left:1044px;top:276px;width:2574px;height:72px;background:#1f1f1f;"></div>
<div class="a t" style="left:1177.31px;top:281.14px;font-family:'Liberation Mono',monospace;font-size:49.48px;line-height:72px;color:#6e7681">7</div>
<div class="a t" style="left:1285.0px;top:281.14px;width:2333.0px;overflow:hidden;font-family:'Liberation Mono',monospace;font-size:49.48px;line-height:72px;height:72px;"><span style="color:#569cd6">def</span><span style="color:#d4d4d4"> </span><span style="color:#dcdcaa">get_chat_template</span><span style="color:#ffd700">()</span><span style="color:#d4d4d4">:</span></div>
<div class="a" style="left:1287px;top:2058px;width:1440px;height:36px;background:rgba(121,121,121,0.4);"></div>
<div class="a" style="left:3606px;top:276px;width:12px;height:1818px;background:linear-gradient(90deg, rgba(0,0,0,0) 0%, rgba(0,0,0,0.35) 100%)"></div>
<div class="a" style="left:3618px;top:276px;width:180px;height:1818px;background:#1f1f1f;"></div>
<svg class="a" style="left:3618px;top:276px;opacity:0.55" width="180" height="320" viewBox="0 0 180 320"><rect x="8.0" y="0.50" width="8.0" height="2.6" fill="#c586c0"/><rect x="18.0" y="0.50" width="54.0" height="2.6" fill="#4ec9b0"/><rect x="74.0" y="0.50" width="12.0" height="2.6" fill="#c586c0"/><rect x="88.0" y="0.50" width="2.0" height="2.6" fill="#ffd700"/><rect x="16.0" y="4.51" width="54.0" height="2.6" fill="#4ec9b0"/><rect x="16.0" y="8.52" width="56.0" height="2.6" fill="#4ec9b0"/><rect x="16.0" y="12.53" width="36.0" height="2.6" fill="#4ec9b0"/><rect x="8.0" y="16.54" width="2.0" height="2.6" fill="#ffd700"/><rect x="8.0" y="24.56" width="6.0" height="2.6" fill="#569cd6"/><rect x="16.0" y="24.56" width="34.0" height="2.6" fill="#dcdcaa"/><rect x="50.0" y="24.56" width="6.0" height="2.6" fill="#ffd700"/><rect x="16.0" y="32.58" width="20.0" height="2.6" fill="#4fc1ff"/><rect x="38.0" y="32.58" width="2.0" height="2.6" fill="#d4d4d4"/><rect x="42.0" y="32.58" width="6.0" height="2.6" fill="#ce9178"/><rect x="48.0" y="40.60" width="16.0" height="2.6" fill="#ce9178"/><rect x="66.0" y="40.60" width="18.0" height="2.6" fill="#569cd6"/><rect x="48.0" y="48.62" width="16.0" height="2.6" fill="#ce9178"/><rect x="66.0" y="48.62" width="18.0" height="2.6" fill="#569cd6"/><rect x="48.0" y="56.64" width="18.0" height="2.6" fill="#ce9178"/><rect x="68.0" y="56.64" width="20.0" height="2.6" fill="#569cd6"/><rect x="48.0" y="64.66" width="16.0" height="2.6" fill="#ce9178"/><rect x="66.0" y="64.66" width="18.0" height="2.6" fill="#569cd6"/><rect x="48.0" y="72.68" width="10.0" height="2.6" fill="#ce9178"/><rect x="64.0" y="72.68" width="12.0" height="2.6" fill="#569cd6"/><rect x="48.0" y="80.70" width="22.0" height="2.6" fill="#ce9178"/><rect x="72.0" y="80.70" width="4.0" height="2.6" fill="#ce9178"/><rect x="78.0" y="80.70" width="10.0" height="2.6" fill="#ce9178"/><rect x="90.0" y="80.70" width="10.0" height="2.6" fill="#569cd6"/><rect x="48.0" y="88.72" width="10.0" height="2.6" fill="#ce9178"/><rect x="60.0" y="88.72" width="14.0" height="2.6" fill="#ce9178"/><rect x="76.0" y="88.72" width="14.0" height="2.6" fill="#569cd6"/><rect x="48.0" y="96.74" width="12.0" height="2.6" fill="#ce9178"/><rect x="62.0" y="96.74" width="10.0" height="2.6" fill="#ce9178"/><rect x="74.0" y="96.74" width="16.0" height="2.6" fill="#569cd6"/><rect x="40.0" y="104.76" width="6.0" height="2.6" fill="#ce9178"/><rect x="16.0" y="116.79" width="20.0" height="2.6" fill="#4fc1ff"/><rect x="38.0" y="116.79" width="2.0" height="2.6" fill="#d4d4d4"/><rect x="42.0" y="116.79" width="6.0" height="2.6" fill="#ce9178"/><rect x="16.0" y="120.80" width="6.0" height="2.6" fill="#ce9178"/><rect x="24.0" y="120.80" width="6.0" height="2.6" fill="#ce9178"/><rect x="32.0" y="120.80" width="4.0" height="2.6" fill="#ce9178"/><rect x="38.0" y="120.80" width="12.0" height="2.6" fill="#ce9178"/><rect x="52.0" y="120.80" width="18.0" height="2.6" fill="#ce9178"/><rect x="72.0" y="120.80" width="12.0" height="2.6" fill="#ce9178"/><rect x="86.0" y="120.80" width="12.0" height="2.6" fill="#ce9178"/><rect x="100.0" y="120.80" width="24.0" height="2.6" fill="#ce9178"/><rect x="126.0" y="120.80" width="4.0" height="2.6" fill="#ce9178"/><rect x="132.0" y="120.80" width="6.0" height="2.6" fill="#ce9178"/><rect x="140.0" y="120.80" width="28.0" height="2.6" fill="#ce9178"/><rect x="170.0" y="120.80" width="8.0" height="2.6" fill="#ce9178"/><rect x="16.0" y="128.82" width="10.0" height="2.6" fill="#ce9178"/><rect x="28.0" y="128.82" width="18.0" height="2.6" fill="#ce9178"/><rect x="48.0" y="128.82" width="30.0" height="2.6" fill="#ce9178"/><rect x="80.0" y="128.82" width="26.0" height="2.6" fill="#ce9178"/><rect x="108.0" y="128.82" width="12.0" height="2.6" fill="#ce9178"/><rect x="122.0" y="128.82" width="14.0" height="2.6" fill="#ce9178"/><rect x="138.0" y="128.82" width="6.0" height="2.6" fill="#ce9178"/><rect x="146.0" y="128.82" width="4.0" height="2.6" fill="#ce9178"/><rect x="152.0" y="128.82" width="6.0" height="2.6" fill="#ce9178"/><rect x="160.0" y="128.82" width="18.0" height="2.6" fill="#ce9178"/><rect x="16.0" y="136.84" width="6.0" height="2.6" fill="#ce9178"/><rect x="24.0" y="136.84" width="22.0" height="2.6" fill="#ce9178"/><rect x="48.0" y="136.84" width="10.0" height="2.6" fill="#ce9178"/><rect x="60.0" y="136.84" width="8.0" height="2.6" fill="#ce9178"/><rect x="70.0" y="136.84" width="6.0" height="2.6" fill="#ce9178"/><rect x="78.0" y="136.84" width="4.0" height="2.6" fill="#ce9178"/><rect x="84.0" y="136.84" width="10.0" height="2.6" fill="#ce9178"/><rect x="96.0" y="136.84" width="6.0" height="2.6" fill="#ce9178"/><rect x="104.0" y="136.84" width="4.0" height="2.6" fill="#ce9178"/><rect x="110.0" y="136.84" width="2.0" height="2.6" fill="#ce9178"/><rect x="114.0" y="136.84" width="8.0" height="2.6" fill="#ce9178"/><rect x="124.0" y="136.84" width="10.0" height="2.6" fill="#ce9178"/><rect x="136.0" y="136.84" width="2.0" height="2.6" fill="#ce9178"/><rect x="140.0" y="136.84" width="10.0" height="2.6" fill="#ce9178"/><rect x="152.0" y="136.84" width="14.0" height="2.6" fill="#ce9178"/><rect x="168.0" y="136.84" width="10.0" height="2.6" fill="#ce9178"/><rect x="16.0" y="144.86" width="6.0" height="2.6" fill="#ce9178"/><rect x="24.0" y="144.86" width="18.0" height="2.6" fill="#ce9178"/><rect x="44.0" y="144.86" width="6.0" height="2.6" fill="#ce9178"/><rect x="52.0" y="144.86" width="20.0" height="2.6" fill="#ce9178"/><rect x="74.0" y="144.86" width="6.0" height="2.6" fill="#ce9178"/><rect x="16.0" y="148.87" width="2.0" height="2.6" fill="#ce9178"/><rect x="20.0" y="148.87" width="20.0" height="2.6" fill="#ce9178"/><rect x="42.0" y="148.87" width="8.0" height="2.6" fill="#ce9178"/><rect x="52.0" y="148.87" width="10.0" height="2.6" fill="#ce9178"/><rect x="16.0" y="152.88" width="2.0" height="2.6" fill="#ce9178"/><rect x="20.0" y="152.88" width="14.0" height="2.6" fill="#ce9178"/><rect x="36.0" y="152.88" width="20.0" height="2.6" fill="#ce9178"/><rect x="16.0" y="156.89" width="2.0" height="2.6" fill="#ce9178"/><rect x="20.0" y="156.89" width="18.0" height="2.6" fill="#ce9178"/><rect x="40.0" y="156.89" width="22.0" height="2.6" fill="#ce9178"/><rect x="16.0" y="160.90" width="2.0" height="2.6" fill="#ce9178"/><rect x="20.0" y="160.90" width="16.0" height="2.6" fill="#ce9178"/><rect x="38.0" y="160.90" width="24.0" height="2.6" fill="#ce9178"/><rect x="16.0" y="164.91" width="2.0" height="2.6" fill="#ce9178"/><rect x="20.0" y="164.91" width="20.0" height="2.6" fill="#ce9178"/><rect x="42.0" y="164.91" width="14.0" height="2.6" fill="#ce9178"/><rect x="16.0" y="168.92" width="2.0" height="2.6" fill="#ce9178"/><rect x="20.0" y="168.92" width="8.0" height="2.6" fill="#ce9178"/><rect x="30.0" y="168.92" width="18.0" height="2.6" fill="#ce9178"/><rect x="16.0" y="172.93" width="2.0" height="2.6" fill="#ce9178"/><rect x="20.0" y="172.93" width="14.0" height="2.6" fill="#ce9178"/><rect x="36.0" y="172.93" width="26.0" height="2.6" fill="#ce9178"/><rect x="16.0" y="176.94" width="2.0" height="2.6" fill="#ce9178"/><rect x="20.0" y="176.94" width="26.0" height="2.6" fill="#ce9178"/><rect x="48.0" y="176.94" width="16.0" height="2.6" fill="#ce9178"/><rect x="16.0" y="180.95" width="2.0" height="2.6" fill="#ce9178"/><rect x="20.0" y="180.95" width="26.0" height="2.6" fill="#ce9178"/><rect x="48.0" y="180.95" width="28.0" height="2.6" fill="#ce9178"/><rect x="78.0" y="180.95" width="16.0" height="2.6" fill="#ce9178"/><rect x="96.0" y="180.95" width="6.0" height="2.6" fill="#ce9178"/><rect x="104.0" y="180.95" width="12.0" height="2.6" fill="#ce9178"/><rect x="118.0" y="180.95" width="10.0" height="2.6" fill="#ce9178"/><rect x="130.0" y="180.95" width="14.0" height="2.6" fill="#ce9178"/><rect x="16.0" y="188.97" width="6.0" height="2.6" fill="#ce9178"/><rect x="24.0" y="188.97" width="8.0" height="2.6" fill="#ce9178"/><rect x="34.0" y="188.97" width="14.0" height="2.6" fill="#ce9178"/><rect x="50.0" y="188.97" width="12.0" height="2.6" fill="#ce9178"/><rect x="16.0" y="196.99" width="4.0" height="2.6" fill="#ce9178"/><rect x="22.0" y="196.99" width="10.0" height="2.6" fill="#ce9178"/><rect x="34.0" y="196.99" width="8.0" height="2.6" fill="#ce9178"/><rect x="44.0" y="196.99" width="2.0" height="2.6" fill="#ce9178"/><rect x="48.0" y="196.99" width="12.0" height="2.6" fill="#ce9178"/><rect x="62.0" y="196.99" width="8.0" height="2.6" fill="#ce9178"/><rect x="72.0" y="196.99" width="16.0" height="2.6" fill="#ce9178"/><rect x="90.0" y="196.99" width="12.0" height="2.6" fill="#ce9178"/><rect x="104.0" y="196.99" width="20.0" height="2.6" fill="#ce9178"/><rect x="126.0" y="196.99" width="8.0" height="2.6" fill="#ce9178"/><rect x="136.0" y="196.99" width="2.0" height="2.6" fill="#ce9178"/><rect x="140.0" y="196.99" width="12.0" height="2.6" fill="#ce9178"/><rect x="154.0" y="196.99" width="6.0" height="2.6" fill="#ce9178"/><rect x="162.0" y="196.99" width="16.0" height="2.6" fill="#ce9178"/><rect x="16.0" y="201.00" width="4.0" height="2.6" fill="#ce9178"/><rect x="22.0" y="201.00" width="6.0" height="2.6" fill="#ce9178"/><rect x="30.0" y="201.00" width="2.0" height="2.6" fill="#ce9178"/><rect x="34.0" y="201.00" width="12.0" height="2.6" fill="#ce9178"/><rect x="48.0" y="201.00" width="8.0" height="2.6" fill="#ce9178"/><rect x="58.0" y="201.00" width="8.0" height="2.6" fill="#ce9178"/><rect x="68.0" y="201.00" width="2.0" height="2.6" fill="#ce9178"/><rect x="72.0" y="201.00" width="10.0" height="2.6" fill="#ce9178"/><rect x="84.0" y="201.00" width="22.0" height="2.6" fill="#ce9178"/><rect x="108.0" y="201.00" width="4.0" height="2.6" fill="#ce9178"/><rect x="114.0" y="201.00" width="6.0" height="2.6" fill="#ce9178"/><rect x="122.0" y="201.00" width="16.0" height="2.6" fill="#ce9178"/><rect x="16.0" y="205.01" width="4.0" height="2.6" fill="#ce9178"/><rect x="22.0" y="205.01" width="6.0" height="2.6" fill="#ce9178"/><rect x="30.0" y="205.01" width="12.0" height="2.6" fill="#ce9178"/><rect x="44.0" y="205.01" width="4.0" height="2.6" fill="#ce9178"/><rect x="50.0" y="205.01" width="12.0" height="2.6" fill="#ce9178"/><rect x="64.0" y="205.01" width="12.0" height="2.6" fill="#ce9178"/><rect x="78.0" y="205.01" width="4.0" height="2.6" fill="#ce9178"/><rect x="84.0" y="205.01" width="10.0" height="2.6" fill="#ce9178"/><rect x="96.0" y="205.01" width="4.0" height="2.6" fill="#ce9178"/><rect x="102.0" y="205.01" width="6.0" height="2.6" fill="#ce9178"/><rect x="110.0" y="205.01" width="12.0" height="2.6" fill="#ce9178"/><rect x="124.0" y="205.01" width="4.0" height="2.6" fill="#ce9178"/><rect x="130.0" y="205.01" width="6.0" height="2.6" fill="#ce9178"/><rect x="138.0" y="205.01" width="24.0" height="2.6" fill="#ce9178"/><rect x="164.0" y="205.01" width="4.0" height="2.6" fill="#ce9178"/><rect x="170.0" y="205.01" width="8.0" height="2.6" fill="#ce9178"/><rect x="16.0" y="209.02" width="4.0" height="2.6" fill="#ce9178"/><rect x="22.0" y="209.02" width="10.0" height="2.6" fill="#ce9178"/><rect x="34.0" y="209.02" width="8.0" height="2.6" fill="#ce9178"/><rect x="44.0" y="209.02" width="2.0" height="2.6" fill="#ce9178"/><rect x="48.0" y="209.02" width="12.0" height="2.6" fill="#ce9178"/><rect x="62.0" y="209.02" width="12.0" height="2.6" fill="#ce9178"/><rect x="76.0" y="209.02" width="8.0" height="2.6" fill="#ce9178"/><rect x="86.0" y="209.02" width="8.0" height="2.6" fill="#ce9178"/><rect x="96.0" y="209.02" width="12.0" height="2.6" fill="#ce9178"/><rect x="110.0" y="209.02" width="14.0" height="2.6" fill="#ce9178"/><rect x="126.0" y="209.02" width="22.0" height="2.6" fill="#ce9178"/><rect x="150.0" y="209.02" width="12.0" height="2.6" fill="#ce9178"/><rect x="164.0" y="209.02" width="14.0" height="2.6" fill="#ce9178"/><rect x="16.0" y="213.03" width="4.0" height="2.6" fill="#ce9178"/><rect x="22.0" y="213.03" width="22.0" height="2.6" fill="#ce9178"/><rect x="46.0" y="213.03" width="30.0" height="2.6" fill="#ce9178"/><rect x="78.0" y="213.03" width="6.0" height="2.6" fill="#ce9178"/><rect x="86.0" y="213.03" width="10.0" height="2.6" fill="#ce9178"/><rect x="16.0" y="217.04" width="4.0" height="2.6" fill="#ce9178"/><rect x="22.0" y="217.04" width="22.0" height="2.6" fill="#ce9178"/><rect x="46.0" y="217.04" width="4.0" height="2.6" fill="#ce9178"/><rect x="52.0" y="217.04" width="8.0" height="2.6" fill="#ce9178"/><rect x="62.0" y="217.04" width="6.0" height="2.6" fill="#ce9178"/><rect x="70.0" y="217.04" width="10.0" height="2.6" fill="#ce9178"/><rect x="82.0" y="217.04" width="12.0" height="2.6" fill="#ce9178"/><rect x="16.0" y="221.05" width="4.0" height="2.6" fill="#ce9178"/><rect x="22.0" y="221.05" width="18.0" height="2.6" fill="#ce9178"/><rect x="42.0" y="221.05" width="6.0" height="2.6" fill="#ce9178"/><rect x="50.0" y="221.05" width="14.0" height="2.6" fill="#ce9178"/><rect x="66.0" y="221.05" width="6.0" height="2.6" fill="#ce9178"/><rect x="74.0" y="221.05" width="10.0" height="2.6" fill="#ce9178"/><rect x="86.0" y="221.05" width="8.0" height="2.6" fill="#ce9178"/><rect x="96.0" y="221.05" width="16.0" height="2.6" fill="#ce9178"/><rect x="16.0" y="225.06" width="4.0" height="2.6" fill="#ce9178"/><rect x="22.0" y="225.06" width="10.0" height="2.6" fill="#ce9178"/><rect x="34.0" y="225.06" width="14.0" height="2.6" fill="#ce9178"/><rect x="50.0" y="225.06" width="14.0" height="2.6" fill="#ce9178"/><rect x="66.0" y="225.06" width="8.0" height="2.6" fill="#ce9178"/><rect x="76.0" y="225.06" width="24.0" height="2.6" fill="#ce9178"/><rect x="102.0" y="225.06" width="8.0" height="2.6" fill="#ce9178"/><rect x="112.0" y="225.06" width="6.0" height="2.6" fill="#ce9178"/><rect x="120.0" y="225.06" width="38.0" height="2.6" fill="#ce9178"/><rect x="16.0" y="229.07" width="4.0" height="2.6" fill="#ce9178"/><rect x="22.0" y="229.07" width="10.0" height="2.6" fill="#ce9178"/><rect x="34.0" y="229.07" width="8.0" height="2.6" fill="#ce9178"/><rect x="44.0" y="229.07" width="12.0" height="2.6" fill="#ce9178"/><rect x="58.0" y="229.07" width="4.0" height="2.6" fill="#ce9178"/><rect x="64.0" y="229.07" width="8.0" height="2.6" fill="#ce9178"/><rect x="74.0" y="229.07" width="6.0" height="2.6" fill="#ce9178"/><rect x="82.0" y="229.07" width="14.0" height="2.6" fill="#ce9178"/><rect x="98.0" y="229.07" width="18.0" height="2.6" fill="#ce9178"/><rect x="118.0" y="229.07" width="4.0" height="2.6" fill="#ce9178"/><rect x="124.0" y="229.07" width="22.0" height="2.6" fill="#ce9178"/><rect x="148.0" y="229.07" width="12.0" height="2.6" fill="#ce9178"/><rect x="162.0" y="229.07" width="4.0" height="2.6" fill="#ce9178"/><rect x="168.0" y="229.07" width="10.0" height="2.6" fill="#ce9178"/><rect x="16.0" y="233.08" width="6.0" height="2.6" fill="#ce9178"/><rect x="24.0" y="233.08" width="6.0" height="2.6" fill="#ce9178"/><rect x="32.0" y="233.08" width="14.0" height="2.6" fill="#ce9178"/><rect x="48.0" y="233.08" width="18.0" height="2.6" fill="#ce9178"/><rect x="68.0" y="233.08" width="18.0" height="2.6" fill="#ce9178"/><rect x="88.0" y="233.08" width="4.0" height="2.6" fill="#ce9178"/><rect x="94.0" y="233.08" width="20.0" height="2.6" fill="#ce9178"/><rect x="116.0" y="233.08" width="14.0" height="2.6" fill="#ce9178"/><rect x="16.0" y="237.09" width="6.0" height="2.6" fill="#ce9178"/><rect x="24.0" y="237.09" width="10.0" height="2.6" fill="#ce9178"/><rect x="36.0" y="237.09" width="6.0" height="2.6" fill="#ce9178"/><rect x="44.0" y="237.09" width="12.0" height="2.6" fill="#ce9178"/><rect x="58.0" y="237.09" width="12.0" height="2.6" fill="#ce9178"/><rect x="72.0" y="237.09" width="8.0" height="2.6" fill="#ce9178"/><rect x="82.0" y="237.09" width="2.0" height="2.6" fill="#ce9178"/><rect x="86.0" y="237.09" width="8.0" height="2.6" fill="#ce9178"/><rect x="96.0" y="237.09" width="8.0" height="2.6" fill="#ce9178"/><rect x="106.0" y="237.09" width="10.0" height="2.6" fill="#ce9178"/><rect x="118.0" y="237.09" width="6.0" height="2.6" fill="#ce9178"/><rect x="126.0" y="237.09" width="8.0" height="2.6" fill="#ce9178"/><rect x="136.0" y="237.09" width="2.0" height="2.6" fill="#ce9178"/><rect x="140.0" y="237.09" width="8.0" height="2.6" fill="#ce9178"/><rect x="150.0" y="237.09" width="8.0" height="2.6" fill="#ce9178"/><rect x="160.0" y="237.09" width="12.0" height="2.6" fill="#ce9178"/><rect x="174.0" y="237.09" width="4.0" height="2.6" fill="#ce9178"/><rect x="16.0" y="249.12" width="10.0" height="2.6" fill="#ce9178"/><rect x="16.0" y="253.13" width="2.0" height="2.6" fill="#ce9178"/><rect x="20.0" y="253.13" width="18.0" height="2.6" fill="#ce9178"/><rect x="16.0" y="257.14" width="2.0" height="2.6" fill="#ce9178"/><rect x="20.0" y="257.14" width="30.0" height="2.6" fill="#ce9178"/><rect x="52.0" y="257.14" width="14.0" height="2.6" fill="#ce9178"/><rect x="16.0" y="261.15" width="6.0" height="2.6" fill="#ce9178"/><rect x="16.0" y="269.17" width="26.0" height="2.6" fill="#9cdcfe"/><rect x="44.0" y="269.17" width="2.0" height="2.6" fill="#d4d4d4"/><rect x="48.0" y="269.17" width="54.0" height="2.6" fill="#4ec9b0"/><rect x="102.0" y="269.17" width="28.0" height="2.6" fill="#dcdcaa"/><rect x="130.0" y="269.17" width="2.0" height="2.6" fill="#ffd700"/><rect x="132.0" y="269.17" width="20.0" height="2.6" fill="#4fc1ff"/><rect x="152.0" y="269.17" width="2.0" height="2.6" fill="#ffd700"/><rect x="16.0" y="273.18" width="24.0" height="2.6" fill="#9cdcfe"/><rect x="42.0" y="273.18" width="2.0" height="2.6" fill="#d4d4d4"/><rect x="46.0" y="273.18" width="52.0" height="2.6" fill="#4ec9b0"/><rect x="98.0" y="273.18" width="28.0" height="2.6" fill="#dcdcaa"/><rect x="126.0" y="273.18" width="2.0" height="2.6" fill="#ffd700"/><rect x="128.0" y="273.18" width="20.0" height="2.6" fill="#4fc1ff"/><rect x="148.0" y="273.18" width="2.0" height="2.6" fill="#ffd700"/><rect x="16.0" y="281.20" width="12.0" height="2.6" fill="#c586c0"/><rect x="30.0" y="281.20" width="36.0" height="2.6" fill="#4ec9b0"/><rect x="66.0" y="281.20" width="28.0" height="2.6" fill="#dcdcaa"/><rect x="94.0" y="281.20" width="4.0" height="2.6" fill="#ffd700"/><rect x="98.0" y="281.20" width="28.0" height="2.6" fill="#9cdcfe"/><rect x="128.0" y="281.20" width="24.0" height="2.6" fill="#9cdcfe"/><rect x="152.0" y="281.20" width="4.0" height="2.6" fill="#ffd700"/></svg>
<div class="a" style="left:3798px;top:276px;width:2px;height:1818px;background:#191919;"></div>
<div class="a" style="left:3800px;top:276px;width:40px;height:1818px;background:#1f1f1f;"></div>
<div class="a" style="left:3798px;top:945px;width:42px;height:479px;background:#434343;"></div>
<div class="a" style="left:3799px;top:1074px;width:41px;height:5px;background:#8a8a8a;"></div>
<div class="a" style="left:0px;top:2094px;width:3840px;height:3px;background:#2b2b2b;"></div>
<div class="a" style="left:0px;top:2097px;width:3840px;height:63px;background:#181818;"></div>
<svg class="a" style="left:28px;top:2104px;" width="40" height="44" viewBox="0 0 40 44"><path d="M5 15.3 L19.2 27.3 L5 39.8 M34.4 2.8 L20.3 15.3 L34.4 27.8" stroke="#cccccc" stroke-width="3" fill="none" stroke-linecap="round"/></svg>
<svg class="a" style="left:120px;top:2104px;" width="48" height="48" viewBox="0 0 48 48"><circle cx="23.5" cy="23.5" r="19" stroke="#cccccc" stroke-width="3.3" fill="none"/><path d="M15.5 15.5 L31.5 31.5 M31.5 15.5 L15.5 31.5" stroke="#cccccc" stroke-width="3.3"/></svg>
<div class="a t" style="left:177.5px;top:2110.55px;font-family:'Liberation Sans',sans-serif;font-size:37px;line-height:37px;color:#cccccc;">0</div>
<svg class="a" style="left:208px;top:2104px;" width="48" height="48" viewBox="0 0 48 48"><path d="M23.4 4 L43.5 39.7 H3.3 Z" stroke="#cccccc" stroke-width="3.2" fill="none" stroke-linejoin="round"/><path d="M23.4 14.7 V27.8" stroke="#cccccc" stroke-width="3.2"/><circle cx="23.4" cy="32.7" r="2.3" fill="#cccccc"/></svg>
<div class="a t" style="left:264.5px;top:2110.55px;font-family:'Liberation Sans',sans-serif;font-size:37px;line-height:37px;color:#cccccc;">0</div>
<div class="a" style="left:344px;top:2115px;width:25px;height:25px;border-radius:50%;background:#0078d4"></div>
<div class="a t" style="left:388.75px;top:2110.55px;font-family:'Liberation Sans',sans-serif;font-size:37px;line-height:37px;color:#cccccc;letter-spacing:-0.44px;">Update is ready, click to restart.</div>
<div class="a" style="left:1964px;top:2097px;width:96px;height:60px;background:#36383c;"></div>
<svg class="a" style="left:1988px;top:2102px;" width="48" height="48" viewBox="0 0 48 48"><circle cx="20" cy="20.5" r="14.8" stroke="#cccccc" stroke-width="3.1" fill="none"/><path d="M20 13.5 V27.5 M13 20.5 H27" stroke="#cccccc" stroke-width="3.1"/><path d="M30.5 31 L41.5 42" stroke="#cccccc" stroke-width="3.3" stroke-linecap="round"/></svg>
<div class="a t" style="left:2084.0px;top:2110.55px;font-family:'Liberation Sans',sans-serif;font-size:37px;line-height:37px;color:#cccccc;letter-spacing:-1.34px;">Ln 43, Col 1</div>
<div class="a t" style="left:2317.25px;top:2111.40px;font-family:'Liberation Sans',sans-serif;font-size:36px;line-height:36px;color:#cccccc;letter-spacing:-1.62px;">Spaces: 4</div>
<div class="a t" style="left:2511.25px;top:2112.25px;font-family:'Liberation Sans',sans-serif;font-size:35px;line-height:35px;color:#cccccc;letter-spacing:-0.68px;">UTF-8</div>
<div class="a t" style="left:2654.25px;top:2113.10px;font-family:'Liberation Sans',sans-serif;font-size:34px;line-height:34px;color:#cccccc;letter-spacing:-3.25px;">CRLF</div>
<div class="a t" style="left:2786.5px;top:2112.55px;font-family:'Liberation Sans',sans-serif;font-size:37px;line-height:37px;color:#cccccc;letter-spacing:1.5px;">{ }</div>
<div class="a t" style="left:2845.0px;top:2110.55px;font-family:'Liberation Sans',sans-serif;font-size:37px;line-height:37px;color:#cccccc;letter-spacing:0.05px;">Python</div>
<div class="a" style="left:2984px;top:2097px;width:297px;height:60px;background:#36383c;"></div>
<svg class="a" style="left:3000px;top:2100px;" width="60" height="54" viewBox="0 0 60 54"><path d="M6 33 Q6 24.5 13 24.5 H49 Q56 24.5 56 33 Q56 41 48 44.5 Q40 48.5 31 48.5 Q22 48.5 14 44.5 Q6 41 6 33 Z" fill="#cccccc"/><path d="M16.5 27 H46 V41.5 Q31 47.5 16.5 41.5 Z" fill="#36383c"/><rect x="23" y="30" width="5.6" height="9" rx="2.6" fill="#cccccc"/><rect x="33.5" y="30" width="5.8" height="9" rx="2.6" fill="#cccccc"/><rect x="13.3" y="8" width="16" height="16.2" rx="5.5" fill="#36383c" stroke="#cccccc" stroke-width="4.5"/><rect x="33.3" y="8" width="15.7" height="16.2" rx="5.5" fill="#36383c" stroke="#cccccc" stroke-width="4.5"/></svg>
<div class="a t" style="left:3063.0px;top:2110.55px;font-family:'Liberation Sans',sans-serif;font-size:37px;line-height:37px;color:#cccccc;letter-spacing:-0.95px;">Finish Setup</div>
<div class="a t" style="left:3305.0px;top:2110.55px;font-family:'Liberation Sans',sans-serif;font-size:37px;line-height:37px;color:#cccccc;letter-spacing:-1.16px;">mds<span style="letter-spacing:-5.91px">_</span>resume<span style="letter-spacing:-5.91px">_</span>env (3.13.12)</div>
<svg class="a" style="left:3772px;top:2102px;" width="46" height="48" viewBox="0 0 46 48"><path d="M24 5.8 Q7.5 6 7.5 22 V32 L3 38.5 H38 L34 32 V25" stroke="#cccccc" stroke-width="3.2" fill="none" stroke-linejoin="round"/><path d="M15 40 Q15 45.5 20.6 45.5 Q26.3 45.5 26.3 40" stroke="#cccccc" stroke-width="3.2" fill="none"/><circle cx="32.8" cy="12.8" r="9" fill="#cccccc"/></svg>
</body></html>
